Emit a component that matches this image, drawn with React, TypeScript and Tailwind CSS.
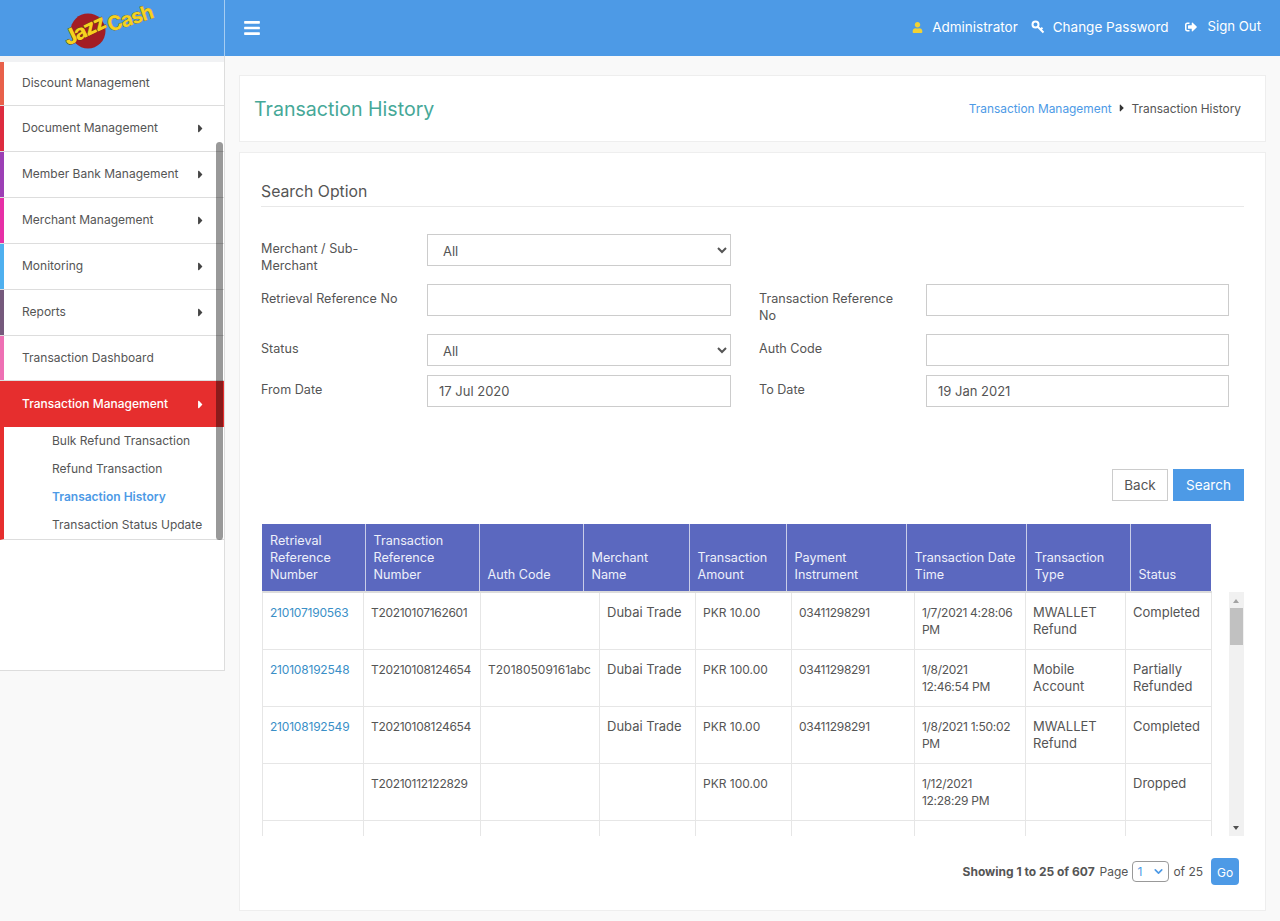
import { FaBars, FaCaretRight, FaSignOutAlt, FaUser } from 'react-icons/fa';
import { ChevronDown } from 'lucide-react';

const menu = [
  { label: 'Discount Management', bar: 'bg-[#e8604a]', height: 'h-[44px]', arrow: false },
  { label: 'Document Management', bar: 'bg-[#dd2b3f]', height: 'h-[46px]', arrow: true },
  { label: 'Member Bank Management', bar: 'bg-[#9c3fb5]', height: 'h-[46px]', arrow: true },
  { label: 'Merchant Management', bar: 'bg-[#e62fa6]', height: 'h-[46px]', arrow: true },
  { label: 'Monitoring', bar: 'bg-[#4fb0ef]', height: 'h-[46px]', arrow: true },
  { label: 'Reports', bar: 'bg-[#75597c]', height: 'h-[46px]', arrow: true },
  { label: 'Transaction Dashboard', bar: 'bg-[#ee70b4]', height: 'h-[45px]', arrow: false },
];

const subMenu = ['Bulk Refund Transaction', 'Refund Transaction', 'Transaction History', 'Transaction Status Update'];

const headers = [
  { label: 'Retrieval Reference Number', width: 'w-[103px]' },
  { label: 'Transaction Reference Number', width: 'w-[114px]' },
  { label: 'Auth Code', width: 'w-[104px]' },
  { label: 'Merchant Name', width: 'w-[106px]' },
  { label: 'Transaction Amount', width: 'w-[97px]' },
  { label: 'Payment Instrument', width: 'w-[120px]' },
  { label: 'Transaction Date Time', width: 'w-[120px]' },
  { label: 'Transaction Type', width: 'w-[104px]' },
  { label: 'Status', width: 'w-[81px]' },
];

// the body columns don't line up with the header ones in the original either
const columns = [
  'w-[101px] text-[12px] tracking-[-0.2px] text-[#3a8fc7]',
  'w-[117px] text-[12px] tracking-[-0.3px]',
  'w-[119px] text-[12px]',
  'w-[96px]',
  'w-[96px] text-[12px]',
  'w-[123px] text-[12px] tracking-[-0.3px]',
  'w-[111px] text-[12px] tracking-[-0.3px]',
  'w-[100px]',
  'w-[86px]',
];

const rows = [
  ['210107190563', 'T20210107162601', '', 'Dubai Trade', 'PKR 10.00', '03411298291', '1/7/2021 4:28:06 PM', 'MWALLET Refund', 'Completed'],
  ['210108192548', 'T20210108124654', 'T20180509161abc', 'Dubai Trade', 'PKR 100.00', '03411298291', '1/8/2021 12:46:54 PM', 'Mobile Account', 'Partially Refunded'],
  ['210108192549', 'T20210108124654', '', 'Dubai Trade', 'PKR 10.00', '03411298291', '1/8/2021 1:50:02 PM', 'MWALLET Refund', 'Completed'],
  ['', 'T20210112122829', '', '', 'PKR 100.00', '', '1/12/2021 12:28:29 PM', '', 'Dropped'],
  ['', '', '', '', '', '', '1/12/2021 12:30:11 PM', '', ''],
];

const Logo = () => (
  <svg width="96" height="50" viewBox="0 0 96 50" className="overflow-visible">
    <circle cx="24" cy="28" r="17.5" fill="#a31d24" />
    <text x="4" y="43" transform="rotate(-26 4 43)" fontFamily="Inter, sans-serif" fontWeight="800" fontSize="21" fill="#f6d21f" stroke="#5a3d10" strokeWidth="0.7" paintOrder="stroke" letterSpacing="-1.6">Jazz</text>
    <text x="46" y="29" transform="rotate(-18 46 29)" fontFamily="Inter, sans-serif" fontWeight="700" fontSize="20" fill="#f6d21f" stroke="#8a6a12" strokeWidth="0.6" paintOrder="stroke" letterSpacing="-0.9">Cash</text>
  </svg>
);

const KeyIcon = () => (
  <svg width="14" height="14" viewBox="0 0 14 14" fill="none" stroke="currentColor" className="mr-2 ml-[13px]">
    <circle cx="4.5" cy="4.5" r="3" strokeWidth="2" />
    <path d="M6.8 6.8 L12.5 12.5 M9.5 9.5 L11.5 7.8" strokeWidth="2" />
  </svg>
);

const Label = ({ children }: { children: string }) => (
  <label className="pt-1.5 pr-4 text-[12.6px] leading-[17px] text-[#555]">{children}</label>
);

const TextBox = ({ value = '' }: { value?: string }) => (
  <input readOnly value={value} className="h-8 w-full border border-[#ccc] bg-white px-[11px] text-[13px] text-[#555] outline-none" />
);

const Dropdown = () => (
  <select className="h-8 w-full border border-[#ccc] bg-white px-[11px] pt-px text-[13px] text-[#555] outline-none">
    <option>All</option>
  </select>
);

export default function App() {
  return (
    <div className="flex h-[921px] w-[1280px] flex-col overflow-hidden bg-[#f9f9f9] font-['Inter','Liberation_Sans',sans-serif]">
      {/* Top bar */}
      <header className="flex h-14 shrink-0 items-center bg-[#4d9ae6] text-white">
        <div className="flex h-full w-[225px] shrink-0 items-center justify-center border-r border-[#a6cdf2]">
          <Logo />
        </div>
        <FaBars className="ml-[18px] text-[18px]" />
        <div className="ml-auto flex items-center pr-[19px] pb-0.5 text-[13.5px]">
          <FaUser className="mr-[9px] text-[11px] text-[#f2d233]" />
          <span>Administrator</span>
          <KeyIcon />
          <span>Change Password</span>
          <FaSignOutAlt className="mr-[11px] ml-4 text-[12px]" />
          <span className="text-[13.2px]">Sign Out</span>
        </div>
      </header>

      <div className="flex min-h-0 flex-1">
        {/* Sidebar */}
        <div className="w-[225px] shrink-0">
          <aside className="relative h-[615px] border-r border-b border-[#ddd] bg-white text-[12px] text-[#555]">
            <div className="h-1.5 bg-[#f1f2f4]" />
            {menu.map((item) => (
              <div key={item.label} className={`relative flex items-center border-b border-[#ddd] pr-[17px] pb-px pl-[22px] ${item.height}`}>
                <span className={`absolute top-0 bottom-0 left-0 w-1 ${item.bar}`} />
                <span>{item.label}</span>
                {item.arrow && <FaCaretRight className="ml-auto text-[13px] text-[#444]" />}
              </div>
            ))}
            <div className="flex h-[46px] items-center bg-[#e62e2e] pr-[17px] pl-[22px] font-medium text-white">
              <span>Transaction Management</span>
              <FaCaretRight className="ml-auto text-[13px]" />
            </div>
            <ul className="h-[113px] border-b border-l-4 border-[#ddd] border-l-[#e62e2e]">
              {subMenu.map((item) => (
                <li key={item} className={`flex h-[28px] items-center pl-[48px] ${item === 'Transaction History' ? 'font-semibold text-[#4d9ae6]' : ''}`}>
                  {item}
                </li>
              ))}
            </ul>
            <div className="absolute top-[86px] right-px h-[398px] w-[7px] rounded bg-black/40" />
          </aside>
        </div>

        {/* Content */}
        <main className="flex-1 pt-[19px] pr-3.5 pl-3.5">
          <div className="flex h-[67px] items-center justify-between border border-[#eee] bg-white pr-6 pl-[14px]">
            <h1 className="pt-[3px] text-[19.6px] text-[#46a898]">Transaction History</h1>
            <div className="flex items-center text-[11.9px] text-[#555]">
              <a className="text-[#4d9ae6]">Transaction Management</a>
              <FaCaretRight className="mx-1 text-[12px] text-[#333]" />
              <span>Transaction History</span>
            </div>
          </div>

          <section className="mt-2.5 h-[759px] border border-[#eee] bg-white px-[21px]">
            <h2 className="border-b border-[#e8e8e8] pt-7 pb-[3px] text-[15.8px] leading-[22px] text-[#555]">Search Option</h2>

            <form className="mt-[27px] grid grid-cols-[166px_304px_28px_167px_303px] grid-rows-[50px_50px_41px_32px]">
              <Label>Merchant / Sub-Merchant</Label>
              <div><Dropdown /></div>
              <div className="col-span-3" />

              <Label>Retrieval Reference No</Label>
              <div><TextBox /></div>
              <div />
              <Label>Transaction Reference No</Label>
              <div><TextBox /></div>

              <Label>Status</Label>
              <div><Dropdown /></div>
              <div />
              <Label>Auth Code</Label>
              <div><TextBox /></div>

              <Label>From Date</Label>
              <div><TextBox value="17 Jul 2020" /></div>
              <div />
              <Label>To Date</Label>
              <div><TextBox value="19 Jan 2021" /></div>
            </form>

            <div className="mt-[62px] flex justify-end gap-[5px] text-[13.5px]">
              <button className="h-8 w-14 border border-[#ccc] bg-white pt-px text-[#555]">Back</button>
              <button className="h-8 w-[71px] bg-[#4d9ae6] pt-px text-white">Search</button>
            </div>

            <div className="mt-[23px] ml-px">
              <table className="w-[949px] table-fixed border-collapse text-[12.6px] leading-[17px] text-[#eef0fa]">
                <thead>
                  <tr className="h-[67px] bg-[#5b68bf]">
                    {headers.map((h) => (
                      <th key={h.label} className={`${h.width} border-r border-[#c9cde8] px-2 pb-2 text-left align-bottom font-normal last:border-r-0`}>
                        {h.label}
                      </th>
                    ))}
                  </tr>
                </thead>
              </table>

              <div className="flex h-[245px] gap-[17px] overflow-hidden">
                <table className="h-fit w-[949px] shrink-0 table-fixed border-collapse border-t-2 border-t-[#dcdcdc] text-[13px] leading-[17px] text-[#555]">
                  <tbody>
                    {rows.map((row, r) => (
                      <tr key={r} className="h-[57px]">
                        {row.map((cell, c) => (
                          <td key={c} className={`${columns[c]} border border-[#e6e6e6] pt-[11px] pr-2 pb-2.5 pl-[7px] align-top ${r === 0 ? 'border-t-0' : ''}`}>
                            {cell}
                          </td>
                        ))}
                      </tr>
                    ))}
                  </tbody>
                </table>
                <div className="relative mt-px h-full w-[15px] shrink-0 bg-[#f1f1f1]">
                  <span className="absolute top-[7px] left-[4px] h-0 w-0 border-x-[3.5px] border-b-4 border-x-transparent border-b-[#a3a3a3]" />
                  <div className="absolute top-4 left-px h-[37px] w-[13px] bg-[#c1c1c1]" />
                  <span className="absolute bottom-[7px] left-[4px] h-0 w-0 border-x-[3.5px] border-t-4 border-x-transparent border-t-[#505050]" />
                </div>
              </div>
            </div>

            <div className="mt-[22px] flex items-center justify-end pr-[5px] text-[12px] leading-[17px] text-[#555]">
              <b className="font-bold">Showing 1 to 25 of 607</b>
              <span className="ml-[5px]">Page</span>
              <div className="relative mx-1 h-[21px] w-[37px]">
                <select className="h-full w-full appearance-none rounded-sm border border-[#999] bg-white pl-1 text-[12px] text-[#4d9ae6] outline-none">
                  <option>1</option>
                </select>
                <ChevronDown size={13} strokeWidth={3} className="pointer-events-none absolute top-1 right-[4px] text-[#4d9ae6]" />
              </div>
              <span>of 25</span>
              <button className="ml-2 h-[27px] w-7 rounded-sm bg-[#4d9ae6] pt-px text-[12px] text-white">Go</button>
            </div>
          </section>
        </main>
      </div>
    </div>
  );
}
